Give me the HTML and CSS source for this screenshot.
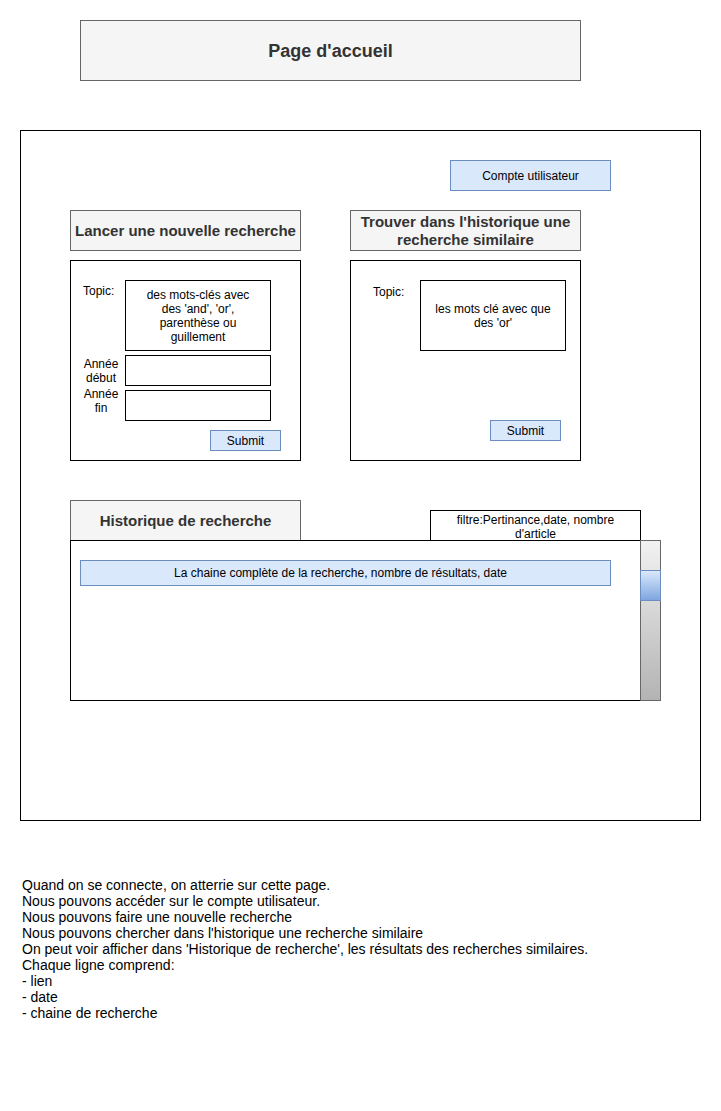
FILE: index.html
```html
<!DOCTYPE html>
<html lang="fr">
<head>
<meta charset="utf-8">
<title>Page d'accueil</title>
<link rel="stylesheet" href="styles.css">
</head>
<body>
<div class="page">
  <div class="title-box">Page d'accueil</div>

  <div class="frame">
    <div class="account-row">
      <div class="blue-btn account">Compte utilisateur</div>
    </div>

    <div class="columns">
      <div class="column">
        <div class="header">Lancer une nouvelle recherche</div>
        <div class="form form-new">
          <div class="label label-topic">Topic:</div>
          <div class="field field-topic">des mots-clés avec<br>des 'and', 'or',<br>parenthèse ou<br>guillement</div>
          <div class="label label-mid">Année<br>début</div>
          <div class="field field-year"></div>
          <div class="label label-up">Année<br>fin</div>
          <div class="field field-year"></div>
          <div class="submit-row">
            <div class="blue-btn submit">Submit</div>
          </div>
        </div>
      </div>

      <div class="column">
        <div class="header header-two">Trouver dans l'historique une<br>recherche similaire</div>
        <div class="form form-find">
          <div class="find-row">
            <div class="label find-label">Topic:</div>
            <div class="field field-topic">les mots clé avec que<br>des 'or'</div>
          </div>
          <div class="submit-row find-submit">
            <div class="blue-btn submit">Submit</div>
          </div>
        </div>
      </div>
    </div>

    <div class="history">
      <div class="history-top">
        <div class="header tab">Historique de recherche</div>
        <div class="filter">filtre:Pertinance,date, nombre<br>d'article</div>
      </div>
      <div class="history-body">
        <div class="list">
          <div class="blue-btn item">La chaine complète de la recherche, nombre de résultats, date</div>
        </div>
        <div class="scrollbar">
          <div class="thumb"></div>
        </div>
      </div>
    </div>
  </div>

  <div class="notes">
    Quand on se connecte, on atterrie sur cette page.<br>
    Nous pouvons accéder sur le compte utilisateur.<br>
    Nous pouvons faire une nouvelle recherche<br>
    Nous pouvons chercher dans l'historique une recherche similaire<br>
    On peut voir afficher dans 'Historique de recherche', les résultats des recherches similaires.<br>
    Chaque ligne comprend:<br>
    - lien<br>
    - date<br>
    - chaine de recherche
  </div>
</div>
</body>
</html>
```

FILE: styles.css
```css
* {
  box-sizing: border-box;
}

html, body {
  margin: 0;
  padding: 0;
  background: #ffffff;
}

body {
  font-family: "Liberation Sans", Arial, Helvetica, sans-serif;
  color: #000000;
  font-size: 12px;
  line-height: 14px;
}

.page {
  width: 721px;
  padding-top: 20px;
}

.title-box {
  margin-left: 80px;
  width: 501px;
  height: 61px;
  background: #f5f5f5;
  border: 1px solid #666666;
  color: #333333;
  font-weight: bold;
  font-size: 18px;
  line-height: 20px;
  display: flex;
  align-items: center;
  justify-content: center;
}

.frame {
  margin-top: 49px;
  margin-left: 20px;
  width: 681px;
  height: 691px;
  border: 1px solid #000000;
}

.blue-btn {
  background: #dae8fc;
  border: 1px solid #6c8ebf;
  display: flex;
  align-items: center;
  justify-content: center;
  text-align: center;
  color: #000000;
}

.account-row {
  padding-top: 29px;
  padding-left: 429px;
}

.account {
  width: 161px;
  height: 31px;
}

.columns {
  display: flex;
  gap: 49px;
  margin-top: 19px;
  padding-left: 49px;
}

.column {
  width: 231px;
  display: flex;
  flex-direction: column;
  gap: 9px;
}

.header {
  height: 41px;
  background: #f5f5f5;
  border: 1px solid #666666;
  color: #333333;
  font-weight: bold;
  font-size: 15px;
  line-height: 18px;
  display: flex;
  align-items: center;
  justify-content: center;
  text-align: center;
}

.form {
  height: 201px;
  border: 1px solid #000000;
}

.form-new {
  display: grid;
  grid-template-columns: 36px 146px;
  column-gap: 6px;
  row-gap: 4px;
  padding: 19px 0 0 12px;
  align-content: start;
}

.label {
  font-size: 12px;
  line-height: 14px;
}

.label-topic {
  padding-top: 4px;
}

.label-mid {
  align-self: center;
  text-align: center;
}

.label-up {
  align-self: start;
  text-align: center;
  margin-top: -3px;
}

.field {
  border: 1px solid #000000;
  background: #ffffff;
  display: flex;
  align-items: center;
  justify-content: center;
  text-align: center;
}

.field-topic {
  width: 146px;
  height: 71px;
}

.field-year {
  width: 146px;
  height: 31px;
}

.submit-row {
  grid-column: 1 / span 2;
  margin-top: 5px;
  padding-left: 127px;
}

.submit {
  width: 71px;
  height: 21px;
}

.form-find {
  padding: 19px 0 0 22px;
}

.find-row {
  display: flex;
}

.find-label {
  width: 47px;
  padding-top: 5px;
}

.find-submit {
  margin-top: 69px;
  padding-left: 117px;
}

.history {
  margin-top: 39px;
  padding-left: 49px;
}

.history-top {
  display: flex;
  align-items: flex-end;
}

.tab {
  width: 231px;
}

.filter {
  margin-left: 129px;
  width: 211px;
  height: 31px;
  border: 1px solid #000000;
  background: #ffffff;
  text-align: center;
  display: flex;
  align-items: center;
  justify-content: center;
  padding-top: 2px;
}

.history-body {
  display: flex;
  margin-top: -1px;
  position: relative;
}

.list {
  width: 571px;
  height: 161px;
  border: 1px solid #000000;
  padding: 19px 0 0 9px;
}

.item {
  width: 531px;
  height: 26px;
  padding-right: 10px;
}

.scrollbar {
  margin-left: -1px;
  width: 21px;
  height: 161px;
  border: 1px solid #666666;
  background: linear-gradient(to bottom, #f2f2f2, #b3b3b3);
  padding-top: 29px;
}

.thumb {
  margin-left: -1px;
  margin-right: -1px;
  height: 31px;
  border: 1px solid #6c8ebf;
  background: linear-gradient(to bottom, #dae8fc, #7ea6e0);
}

.notes {
  margin-top: 56px;
  margin-left: 22px;
  font-size: 14px;
  line-height: 16px;
  color: #000000;
}
```
